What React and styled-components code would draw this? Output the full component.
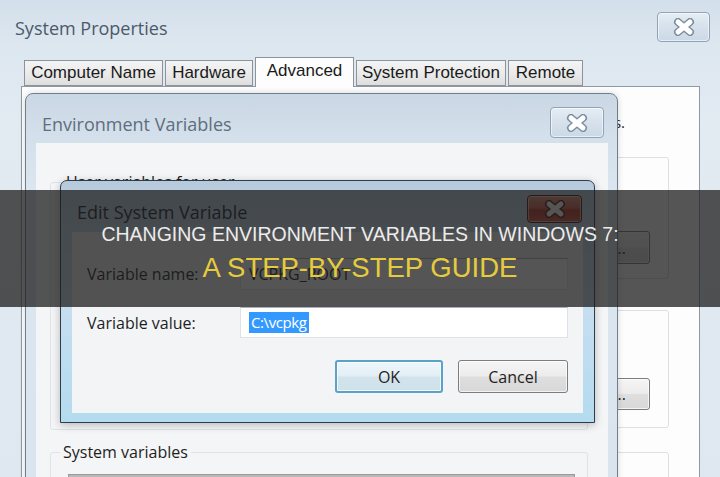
import React from 'react';
import styled, { createGlobalStyle } from 'styled-components';

const GlobalStyle = createGlobalStyle`
  html, body { margin: 0; padding: 0; }
  body {
    width: 720px; height: 477px; overflow: hidden;
    background: #dfe8f0;
    font-family: "Open Sans", "Noto Sans", sans-serif;
  }
  * { box-sizing: border-box; }
`;

const Screen = styled.div`
  position: relative;
  width: 720px;
  height: 477px;
  overflow: hidden;
`;

/* ---------- System Properties (background window) ---------- */
const SysWindow = styled.div`
  width: 720px;
  height: 477px;
  display: flex;
  flex-direction: column;
  background: linear-gradient(180deg, #d3dfea 0px, #dde7f0 45px, #e2eaf2 120px, #dfe8f0 100%);
`;

const SysTitleBar = styled.div`
  flex: none;
  height: 57px;
  display: flex;
  justify-content: space-between;
  align-items: flex-start;
  padding: 12px 10px 0 15px;
`;

const WindowTitle = styled.div`
  font-family: "Open Sans", "Noto Sans", sans-serif;
  font-size: 18px;
  line-height: 24px;
  margin-top: ${p => p.$offset || 0}px;
  color: ${p => p.$color || '#4b5a69'};
  white-space: nowrap;
`;

const CloseBtn = styled.div`
  flex: none;
  width: ${p => p.$w}px;
  height: ${p => p.$h}px;
  border-radius: 4px;
  display: flex;
  align-items: center;
  justify-content: center;
  border: 1px solid ${p => (p.$active ? '#4a1a12' : '#90a4b9')};
  background: ${p =>
    p.$active
      ? 'linear-gradient(180deg, #e2917f 0%, #d0604a 45%, #bb3520 55%, #c9513b 100%)'
      : 'linear-gradient(180deg, #e6edf4 0%, #d6e1ec 50%, #cbd8e5 100%)'};
  box-shadow: inset 0 0 0 1px rgba(255,255,255,0.55);
`;

const TabStrip = styled.div`
  flex: none;
  height: 29px;
  display: flex;
  align-items: flex-end;
  gap: 2px;
  margin-left: 24px;
  position: relative;
  z-index: 1;
`;

const Tab = styled.div`
  width: ${p => p.$w}px;
  height: ${p => (p.$selected ? 30 : 26)}px;
  margin-bottom: ${p => (p.$selected ? -1 : 0)}px;
  border: 1px solid #8d939b;
  border-bottom: ${p => (p.$selected ? 'none' : '1px solid #8d939b')};
  background: ${p =>
    p.$selected ? '#fdfdfd' : 'linear-gradient(180deg, #f4f4f4 0%, #ebebeb 50%, #dedede 100%)'};
  display: flex;
  align-items: ${p => (p.$selected ? 'flex-start' : 'center')};
  justify-content: center;
  padding-top: ${p => (p.$selected ? 3 : 0)}px;
  font-family: "Liberation Sans", Arial, sans-serif;
  font-size: 17px;
  color: #1a1a1a;
  white-space: nowrap;
`;

const Panel = styled.div`
  flex: 1;
  min-height: 0;
  overflow: hidden;
  margin-left: 21px;
  width: 679px;
  border: 1px solid #8e99a4;
  border-bottom: none;
  background: #fdfdfd;
  display: flex;
  flex-direction: column;
  padding: 25px 30px 0 18px;
`;

const Note = styled.div`
  flex: none;
  font-size: 15px;
  line-height: 20px;
  color: #1e1e1e;
  text-align: right;
  padding-right: 44px;
  white-space: nowrap;
`;

const SettingsBox = styled.div`
  flex: none;
  margin-top: ${p => p.$mt}px;
  height: ${p => p.$h}px;
  border: 1px solid #dcdfe3;
  border-radius: 3px;
  display: flex;
  flex-direction: column;
  justify-content: flex-end;
  align-items: flex-end;
  padding: 0 18px ${p => p.$pb}px 12px;
`;

const GroupBox = styled.fieldset`
  flex: none;
  margin: ${p => p.$mt || 0}px 0 0 0;
  min-width: 0;
  height: ${p => (p.$h ? `${p.$h}px` : 'auto')};
  border: 1px solid #dfe3e7;
  border-radius: 3px;
  padding: 0 ${p => p.$pr ?? 18}px 14px ${p => p.$pl ?? 12}px;
  display: flex;
  flex-direction: column;
`;

const Legend = styled.legend`
  padding: 0 3px;
  margin-left: ${p => p.$ml || 0}px;
  font-size: 16px;
  line-height: 20px;
  color: #1e1e1e;
`;

const PushButton = styled.div`
  width: ${p => p.$w}px;
  height: ${p => p.$h || 33}px;
  border-radius: 3px;
  border: ${p => (p.$default ? '2px solid #5aa3c6' : '1px solid #7d7d7d')};
  background: ${p =>
    p.$default
      ? 'linear-gradient(180deg, #eef6fa 0%, #e2eef5 48%, #d2e3ec 52%, #cfe1ea 100%)'
      : 'linear-gradient(180deg, #f5f5f5 0%, #ececec 48%, #dedede 52%, #d8d8d8 100%)'};
  box-shadow: inset 0 0 0 1px rgba(255,255,255,0.7);
  display: flex;
  align-items: center;
  justify-content: center;
  font-size: 16px;
  color: #1e1e1e;
  white-space: nowrap;
`;

/* ---------- Environment Variables window ---------- */
const EnvWindow = styled.div`
  position: absolute;
  left: 25px;
  top: 93px;
  width: 593px;
  height: 400px;
  border: 1px solid #6f7e8d;
  border-radius: 8px 8px 0 0;
  background: linear-gradient(180deg, #cad7e4 0px, #d3dfea 40px, #dbe6f0 100px, #d9e4ef 100%);
  padding: 0 9px 0 10px;
  display: flex;
  flex-direction: column;
  box-shadow: 0 0 6px rgba(0,0,0,0.15);
`;

const WinTitleBar = styled.div`
  height: ${p => p.$h}px;
  flex: none;
  display: flex;
  justify-content: space-between;
  align-items: flex-start;
  padding: ${p => p.$pt}px ${p => p.$pr}px 0 ${p => p.$pl}px;
`;

const EnvClient = styled.div`
  flex: 1;
  min-height: 0;
  background: #f4f5f6;
  display: flex;
  flex-direction: column;
  padding: 29px 20px 0 14px;
`;

const ListBox = styled.div`
  flex: none;
  height: 80px;
  margin-top: 12px;
  border: 1px solid #9a9a9a;
  background: linear-gradient(180deg, #b9b9b9 0px, #c4c4c4 22px, #ffffff 22px);
`;

/* ---------- Edit System Variable dialog ---------- */
const EditDialog = styled.div`
  position: absolute;
  left: 60px;
  top: 180px;
  width: 535px;
  height: 243px;
  border: 1px solid #2f3d4b;
  border-radius: 7px 7px 0 0;
  background: linear-gradient(180deg, #b7cadb 0px, #c3d6e8 50px, #c6def0 120px, #b4dbef 100%);
  padding: 0 11px 9px 11px;
  display: flex;
  flex-direction: column;
  box-shadow: 0 2px 8px rgba(0,0,0,0.25);
`;

const EditClient = styled.div`
  flex: 1;
  background: #f2f4f6;
  padding: 26px 15px 0 15px;
  display: flex;
  flex-direction: column;
`;

const FormGrid = styled.div`
  display: grid;
  grid-template-columns: 153px 1fr;
  row-gap: 17px;
  align-items: center;
`;

const FieldLabel = styled.div`
  font-size: 16px;
  color: #1e1e1e;
  white-space: nowrap;
`;

const TextBox = styled.div`
  height: ${p => p.$h}px;
  border: 1px solid #dde3ea;
  border-top-color: #a9b0b8;
  background: #ffffff;
  display: flex;
  align-items: center;
  padding-left: 8px;
  font-size: 16px;
  color: #1e1e1e;
  white-space: nowrap;
`;

const Selected = styled.span`
  background: #3399ff;
  color: #ffffff;
  padding: 0 2px;
  font-size: 15px;
  letter-spacing: -0.4px;
  line-height: 21px;
`;

const ButtonRow = styled.div`
  display: flex;
  justify-content: flex-end;
  gap: 15px;
  margin-top: 22px;
`;

/* ---------- Overlay banner ---------- */
const Banner = styled.div`
  position: absolute;
  left: 0;
  top: 190px;
  width: 720px;
  height: 117px;
  background: rgba(28, 28, 28, 0.75);
  display: flex;
  flex-direction: column;
  align-items: center;
  padding-top: 32px;
  gap: 6px;
  font-family: "Liberation Sans", Arial, sans-serif;
`;

const BannerTitle = styled.div`
  font-size: 19.5px;
  line-height: 24px;
  color: #ececec;
  white-space: nowrap;
`;

const BannerSubtitle = styled.div`
  font-size: 27.5px;
  line-height: 32px;
  color: #e6cc3c;
  white-space: nowrap;
`;

const XGlyph = ({ outline = '#7d8ea1', fill = '#ffffff' }) => (
  <svg width={24} height={18} viewBox="0 0 24 18">
    <path d="M6 4 L18 14 M18 4 L6 14" stroke={outline} strokeWidth="8" strokeLinecap="round" fill="none" />
    <path d="M6 4 L18 14 M18 4 L6 14" stroke={fill} strokeWidth="5" strokeLinecap="round" fill="none" />
  </svg>
);

const tabs = [
  { label: 'Computer Name', w: 139 },
  { label: 'Hardware', w: 88 },
  { label: 'Advanced', w: 99, selected: true },
  { label: 'System Protection', w: 150 },
  { label: 'Remote', w: 75 },
];

export default function App() {
  return (
    <Screen>
      <GlobalStyle />
      <SysWindow>
        <SysTitleBar>
          <WindowTitle $offset={4}>System Properties</WindowTitle>
          <CloseBtn $w={53} $h={30}>
            <XGlyph />
          </CloseBtn>
        </SysTitleBar>
        <TabStrip>
          {tabs.map(t => (
            <Tab key={t.label} $w={t.w} $selected={t.selected}>
              {t.label}
            </Tab>
          ))}
        </TabStrip>
        <Panel>
          <Note>You must be logged on as an Administrator to make most of these changes.</Note>
          <SettingsBox $mt={25} $h={122} $pb={14}>
            <PushButton $w={120}>Settings...</PushButton>
          </SettingsBox>
          <SettingsBox $mt={31} $h={118} $pb={17}>
            <PushButton $w={120} $h={32}>Settings...</PushButton>
          </SettingsBox>
          <SettingsBox $mt={24} $h={80} $pb={14} />
        </Panel>
      </SysWindow>

      <EnvWindow>
        <WinTitleBar $h={49} $pt={13} $pr={4} $pl={6}>
          <WindowTitle $offset={5} $color="#5e6e7f">Environment Variables</WindowTitle>
          <CloseBtn $w={54} $h={31}>
            <XGlyph />
          </CloseBtn>
        </WinTitleBar>
        <EnvClient>
          <GroupBox $h={258}>
            <Legend>User variables for user</Legend>
          </GroupBox>
          <GroupBox $mt={12} $pl={17} $pr={12}>
            <Legend $ml={-8}>System variables</Legend>
            <ListBox />
          </GroupBox>
        </EnvClient>
      </EnvWindow>

      <EditDialog>
        <WinTitleBar $h={51} $pt={14} $pr={1} $pl={5}>
          <WindowTitle $offset={5} $color="#1b2733">Edit System Variable</WindowTitle>
          <CloseBtn $w={55} $h={28} $active>
            <XGlyph outline="#5a1f16" />
          </CloseBtn>
        </WinTitleBar>
        <EditClient>
          <FormGrid>
            <FieldLabel>Variable name:</FieldLabel>
            <TextBox $h={32}>VCPKG_ROOT</TextBox>
            <FieldLabel>Variable value:</FieldLabel>
            <TextBox $h={31}>
              <Selected>C:\vcpkg</Selected>
            </TextBox>
          </FormGrid>
          <ButtonRow>
            <PushButton $w={108} $default>OK</PushButton>
            <PushButton $w={110}>Cancel</PushButton>
          </ButtonRow>
        </EditClient>
      </EditDialog>

      <Banner>
        <BannerTitle>CHANGING ENVIRONMENT VARIABLES IN WINDOWS 7:</BannerTitle>
        <BannerSubtitle>A STEP-BY-STEP GUIDE</BannerSubtitle>
      </Banner>
    </Screen>
  );
}
